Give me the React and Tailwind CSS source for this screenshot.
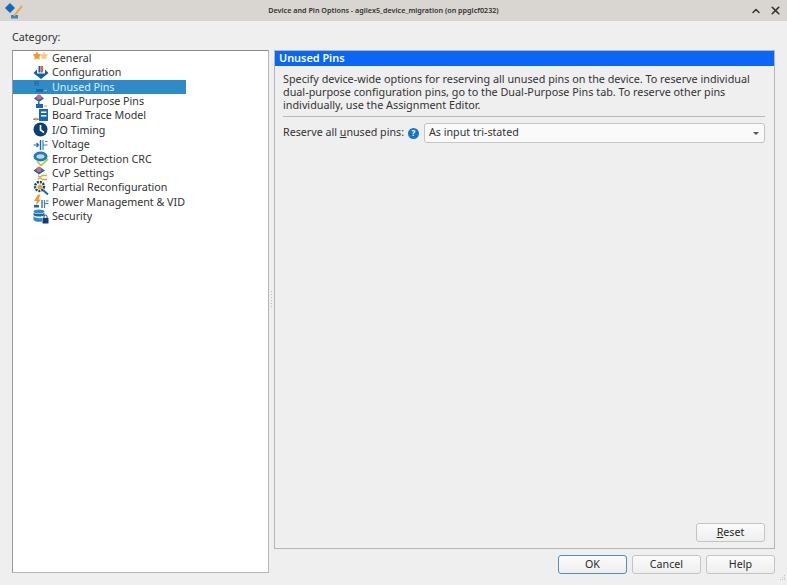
import { ChevronUp, X } from 'lucide-react';

const Star = ({ x, y, r, fill }) => {
  const pts = [];
  for (let i = 0; i < 10; i++) {
    const a = -Math.PI / 2 + (i * Math.PI) / 5;
    const d = i % 2 ? r * 0.55 : r;
    pts.push(`${x + d * Math.cos(a)},${y + d * Math.sin(a)}`);
  }
  return <polygon points={pts.join(' ')} fill={fill} />;
};

const icons = {
  general: (
    <>
      <Star x={4} y={6} r={4.5} fill="#f29a2e" />
      <Star x={11} y={6} r={4.5} fill="#f8c98a" />
    </>
  ),
  config: (
    <>
      <path d="M0.5 8 L4 4.5 V8.5 H12 V4.5 L15.5 8 L8 14 Z" fill="#0f5fa8" />
      <rect x="5.5" y="1" width="2" height="6.5" fill="#0f5fa8" />
      <rect x="8" y="1" width="2" height="6.5" fill="#e8622c" />
    </>
  ),
  unused: (
    <>
      <text x="1" y="7" fontSize="7.5" fontWeight="700" fill="#1d6aa8" fontFamily="Liberation Sans, sans-serif">R</text>
      <rect x="3" y="10" width="7" height="3" fill="#1668b0" />
      <rect x="11" y="11" width="3" height="1" fill="#e9a23b" />
    </>
  ),
  dual: (
    <>
      <path d="M6 0.5 L11 4.5 L6 8 L1 4.5 Z" fill="#1668b0" />
      <circle cx="6" cy="3" r="2.5" fill="#e8626a" />
      <rect x="5" y="8" width="1.5" height="3" fill="#1668b0" />
      <rect x="3" y="10" width="7" height="4" fill="#1668b0" />
      <rect x="11" y="11.5" width="3" height="1" fill="#e9a23b" />
    </>
  ),
  board: (
    <>
      <rect x="6" y="1" width="9" height="12" fill="#1668b0" />
      <rect x="8" y="3.5" width="5.5" height="1.5" fill="#fff" />
      <rect x="8" y="7" width="5.5" height="1.5" fill="#fff" />
      <rect x="0.5" y="10.5" width="5" height="1.5" fill="#1668b0" />
      <circle cx="3" cy="11" r="1.5" fill="#e9a23b" />
    </>
  ),
  timing: (
    <>
      <circle cx="7.5" cy="7.5" r="7" fill="#0b3f73" />
      <path d="M7.5 3 V8 L11 10.5" stroke="#fff" strokeWidth="1.6" fill="none" />
    </>
  ),
  voltage: (
    <>
      <path d="M0.5 8 H5 M3.5 6 L5.5 8 L3.5 10" stroke="#1668b0" strokeWidth="1.2" fill="none" />
      <path d="M7.5 3 V13" stroke="#1668b0" strokeWidth="1.4" />
      <path d="M10 3 V13 M10 8 H14.5 M12 4.5 H14.5" stroke="#3c7fb8" strokeWidth="1.2" fill="none" />
    </>
  ),
  crc: (
    <>
      <ellipse cx="7.5" cy="5.5" rx="7" ry="5" fill="#1e79bd" />
      <ellipse cx="7.5" cy="5.5" rx="4" ry="2.2" fill="#bcd9ee" />
      <path d="M4 10 L8 14.5 L15 8" stroke="#b7cc3c" strokeWidth="1.8" fill="none" />
    </>
  ),
  cvp: (
    <>
      <path d="M6 0.5 L12 4.5 L6 8.5 L0.5 4.5 Z" fill="#1668b0" />
      <circle cx="6" cy="3.5" r="2.5" fill="#e8626a" />
      <path d="M5 9.5 L9 13.5 M5 13.5 L9 9.5 H14 M9 13.5 H14" stroke="#e9a23b" strokeWidth="1.3" fill="none" />
    </>
  ),
  partial: (
    <>
      <circle cx="6.5" cy="6.5" r="4.5" fill="none" stroke="#14456f" strokeWidth="2.4" strokeDasharray="2 1" />
      <circle cx="7" cy="7" r="2.5" fill="#e9a23b" />
      <path d="M10 10 L15 14.5" stroke="#1668b0" strokeWidth="2" />
    </>
  ),
  power: (
    <>
      <path d="M5 0.5 L1 7 H4 L2.5 12 L8 5.5 H5.5 L7.5 0.5 Z" fill="#f29a2e" />
      <rect x="1" y="11" width="5" height="2.5" fill="#1668b0" />
      <path d="M9 6 V14" stroke="#1668b0" strokeWidth="1.3" />
      <path d="M11.5 6 V14 M11.5 9.5 H15.5 M13 7 H15.5" stroke="#3c7fb8" strokeWidth="1.2" fill="none" />
    </>
  ),
  security: (
    <>
      <ellipse cx="6" cy="2.5" rx="5.5" ry="2" fill="#2d8ac7" />
      <path d="M0.5 3.5 V6 C2 8 10 8 11.5 6 V3.5 C10 5.5 2 5.5 0.5 3.5Z" fill="#1668b0" />
      <path d="M0.5 7 V11 C2 13 7 13 9 12.5 V9 C6 9.5 2 9 0.5 7Z" fill="#2d8ac7" />
      <rect x="9.5" y="9" width="6" height="5.5" rx="0.5" fill="#0b3f73" />
      <path d="M11 9 V7.5 A1.5 1.5 0 0 1 14 7.5 V9" stroke="#0b3f73" fill="none" />
    </>
  ),
};

const categories = [
  ['general', 'General'],
  ['config', 'Configuration'],
  ['unused', 'Unused Pins'],
  ['dual', 'Dual-Purpose Pins'],
  ['board', 'Board Trace Model'],
  ['timing', 'I/O Timing'],
  ['voltage', 'Voltage'],
  ['crc', 'Error Detection CRC'],
  ['cvp', 'CvP Settings'],
  ['partial', 'Partial Reconfiguration'],
  ['power', 'Power Management & VID'],
  ['security', 'Security'],
];

const Btn = ({ children, primary }) => (
  <button
    className={`w-[69px] h-[19px] rounded-[3px] border flex items-center justify-center bg-gradient-to-b from-[#fbfbfb] to-[#eeeeee] text-[#2a2a2a] ${primary ? 'border-[#4f8fb8]' : 'border-[#c4c4c4]'}`}
  >
    {children}
  </button>
);

export default function App() {
  return (
    <div className="w-[787px] h-[585px] overflow-hidden flex flex-col bg-[#efefef] text-[#333333] text-[10.7px] font-['Noto_Sans',sans-serif] relative">
      <div className="h-[21px] shrink-0 bg-[#d9d5d1] flex items-center px-[2px] relative">
        <svg width="22" height="18" viewBox="0 0 22 18">
          <path d="M8 1 L13 6 L8 11 L3 6 Z" fill="#0f6cbd" />
          <rect x="9" y="13" width="7" height="3.5" fill="#2d8ac7" />
          <path d="M12 14 L20 4" stroke="#eda33b" strokeWidth="2" />
        </svg>
        <span className="absolute left-0 right-[20px] text-center text-[7.2px] font-semibold text-[#333]">
          Device and Pin Options - agilex5_device_migration (on ppglcf0232)
        </span>
        <div className="ml-auto flex items-center gap-[7px] pr-[3px] relative">
          <ChevronUp size={12} strokeWidth={3} color="#333" />
          <X size={13} strokeWidth={3} color="#333" />
        </div>
      </div>

      <div className="flex-1 flex flex-col px-[12px] pt-[10px]">
        <div className="h-[13px] leading-[13px]">Category:</div>
        <div className="flex mt-[6px] h-[498px]">
          <div className="w-[257px] h-[523px] bg-white border border-[#b5b5b5] border-t-[#8a8a8a] border-l-[#9a9a9a] shrink-0">
            {categories.map(([key, label]) => (
              <div
                key={key}
                className={`h-[14.4px] w-[173px] flex items-center pl-[20px] pb-[0.6px] ${key === 'unused' ? 'bg-[#2e8bc8] text-[#dff0fb]' : ''}`}
              >
                <svg width="16" height="15" viewBox="0 0 16 15" className="shrink-0">
                  {icons[key]}
                </svg>
                <span className="ml-[3px] whitespace-nowrap">{label}</span>
              </div>
            ))}
          </div>

          <div className="w-[5px] shrink-0 flex flex-col items-center justify-center gap-[2px]">
            <span className="w-px h-px bg-[#bcbcbc]" />
            <span className="w-px h-px bg-[#bcbcbc]" />
            <span className="w-px h-px bg-[#bcbcbc]" />
            <span className="w-px h-px bg-[#bcbcbc]" />
            <span className="w-px h-px bg-[#bcbcbc]" />
            <span className="w-px h-px bg-[#bcbcbc]" />
          </div>

          <div className="w-[501px] h-[499px] border border-[#b5b5b5] flex flex-col shrink-0">
            <div className="h-[15px] bg-[#0a66f5] text-white font-semibold text-[10.9px] px-[4px] flex items-center shrink-0">Unused Pins</div>
            <div className="flex-1 flex flex-col px-[8px]">
              <p className="mt-[6px] leading-[13px] whitespace-nowrap text-[10.8px]">
                Specify device-wide options for reserving all unused pins on the device. To reserve individual
                <br />
                dual-purpose configuration pins, go to the Dual-Purpose Pins tab. To reserve other pins
                <br />
                individually, use the Assignment Editor.
              </p>
              <div className="h-px bg-[#b9b9b9] mt-[5px] w-[482px]" />
              <div className="flex items-center mt-[6px] w-[482px]">
                <span className="whitespace-nowrap pb-[1px]">
                  Reserve all <u>u</u>nused pins:
                </span>
                <span className="ml-[4px] w-[11px] h-[11px] rounded-full bg-[#1874c4] text-white text-[8px] font-bold flex items-center justify-center">?</span>
                <div className="ml-[5px] flex-1 h-[20px] bg-[#fafafa] border border-[#c4c4c4] rounded-[3px] flex items-center pl-[4px] pr-[5px]">
                  <span className="pb-[1px]">As input tri-stated</span>
                  <span className="ml-auto w-0 h-0 border-x-[3px] border-x-transparent border-t-[3px] border-t-[#555]" />
                </div>
              </div>
              <div className="mt-auto mb-[6px] w-[482px] flex justify-end">
                <Btn>
                  <span><u>R</u>eset</span>
                </Btn>
              </div>
            </div>
          </div>
        </div>

        <div className="flex justify-end gap-[5px] mt-[7px] ml-[263px] w-[500px]">
          <Btn primary>OK</Btn>
          <Btn>Cancel</Btn>
          <Btn>Help</Btn>
        </div>
      </div>

      <svg width="8" height="8" viewBox="0 0 8 8" className="absolute right-[1px] bottom-[3px]">
        <path d="M6 1h1v1H6zM4 3h1v1H4zM6 3h1v1H6zM2 5h1v1H2zM4 5h1v1H4zM6 5h1v1H6z" fill="#c4c4c4" />
      </svg>
    </div>
  );
}
